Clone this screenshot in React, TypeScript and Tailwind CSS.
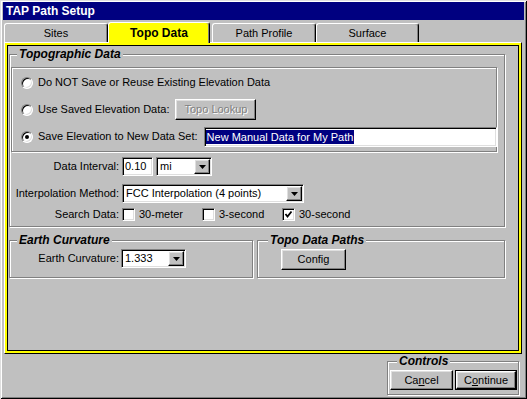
import type { ReactNode } from 'react';

const raised =
  'border border-t-white border-l-white border-r-black border-b-black shadow-[inset_-1px_-1px_0_#808080,inset_1px_1px_0_#dfdfdf]';
const sunken =
  'border border-t-[#808080] border-l-[#808080] border-r-white border-b-white shadow-[inset_1px_1px_0_#000,inset_-1px_-1px_0_#dfdfdf]';
const etched = 'border border-[#808080] shadow-[1px_1px_0_#fff,inset_1px_1px_0_#fff]';

function Legend({ children, className = '' }: { children: ReactNode; className?: string }) {
  return (
    <legend className={`px-[2px] bg-[#c0c0c0] text-[12px] leading-[14px] font-bold italic ${className}`}>
      {children}
    </legend>
  );
}

function Radio({ checked }: { checked?: boolean }) {
  return (
    <span className="w-[12px] h-[12px] rounded-full bg-white border border-t-[#808080] border-l-[#808080] border-r-white border-b-white shadow-[inset_1px_1px_0_#000,inset_-1px_-1px_0_#dfdfdf] flex items-center justify-center shrink-0">
      {checked && <span className="w-[4px] h-[4px] rounded-full bg-black" />}
    </span>
  );
}

function Check({ label, checked }: { label: string; checked?: boolean }) {
  return (
    <div className="w-[80px] flex items-center gap-[4px]">
      <span className={`w-[13px] h-[13px] bg-white flex items-center justify-center shrink-0 ${sunken}`}>
        {checked && (
          <svg width="9" height="9" viewBox="0 0 9 9">
            <polyline points="1.5,4 3.5,6.5 7.5,1.5" fill="none" stroke="#000" strokeWidth="1.8" />
          </svg>
        )}
      </span>
      <span className="whitespace-nowrap">{label}</span>
    </div>
  );
}

function Arrow() {
  return (
    <span className={`w-[16px] h-full bg-[#c0c0c0] flex items-center justify-center shrink-0 ${raised}`}>
      <svg width="7" height="4" viewBox="0 0 7 4">
        <polygon points="0,0 7,0 3.5,4" fill="#000" />
      </svg>
    </span>
  );
}

function Select({ value, className }: { value: string; className: string }) {
  return (
    <div className={`h-[19px] bg-white p-[1px] flex shrink-0 ${sunken} ${className}`}>
      <span className="flex-1 pl-[2px] leading-[15px] whitespace-nowrap">{value}</span>
      <Arrow />
    </div>
  );
}

function Tab({ label, active, className }: { label: string; active?: boolean; className: string }) {
  return (
    <div
      className={`flex items-center justify-center rounded-t-[3px] border-t border-l border-r border-t-white border-l-white border-r-black shadow-[inset_-1px_0_0_#808080] ${
        active ? 'relative z-10 -mb-[1px] h-[21px] bg-[#ffff00] text-[12px] font-bold' : 'h-[19px] bg-[#c0c0c0]'
      } ${className}`}
    >
      {label}
    </div>
  );
}

export default function App() {
  return (
    <div
      className="w-[527px] h-[399px] bg-[#c0c0c0] pt-[2px] px-[3px] pb-[3px] flex flex-col text-black text-[11px] shadow-[inset_1px_1px_0_#dfdfdf,inset_-1px_-1px_0_#000,inset_2px_2px_0_#fff,inset_-2px_-2px_0_#808080]"
      style={{ fontFamily: '"Liberation Sans", Arial, sans-serif' }}
    >
      <div className="h-[18px] bg-[#000080] text-white text-[12px] font-bold flex items-center pl-[3px]">TAP Path Setup</div>

      {/* Tabs */}
      <div className="mt-[2px] h-[20px] flex items-end ml-[1px]">
        <Tab label="Sites" className="w-[104px]" />
        <Tab label="Topo Data" active className="w-[102px]" />
        <Tab label="Path Profile" className="w-[104px] ml-[2px]" />
        <Tab label="Surface" className="w-[103px]" />
      </div>

      {/* Panel */}
      <div className="ml-[1px] w-[518px] h-[312px] border border-t-white border-l-white border-r-black border-b-black">
        <div className="h-full border-2 border-[#ffff00]">
          <div className="h-full border border-black px-[1px] pt-[1px]">
            <fieldset className={`w-[496px] pb-[5px] ${etched}`}>
              <Legend className="ml-[7px]">Topographic Data</Legend>
              <div className={`mt-[6px] ml-[1px] w-[486px] h-[85px] pt-[1px] pl-[9px] whitespace-nowrap ${etched}`}>
                <div className="h-[27px] flex items-center gap-[5px]">
                  <Radio />
                  <span>Do NOT Save or Reuse Existing Elevation Data</span>
                </div>
                <div className="h-[27px] flex items-center gap-[5px]">
                  <Radio />
                  <span>Use Saved Elevation Data:</span>
                  <span
                    className={`ml-[1px] w-[81px] h-[21px] shrink-0 flex items-center justify-center text-[#808080] [text-shadow:1px_1px_0_#fff] ${raised}`}
                  >
                    Topo Lookup
                  </span>
                </div>
                <div className="h-[27px] flex items-center gap-[5px]">
                  <Radio checked />
                  <span className="shrink-0">Save Elevation to New Data Set:</span>
                  <div className={`ml-[1px] w-[293px] h-[20px] shrink-0 bg-white flex items-center pl-[1px] ${sunken}`}>
                    <span className="bg-[#000080] text-white leading-[14px] px-[1px]">New Manual Data for My Path</span>
                  </div>
                </div>
              </div>

              <div className="mt-[5px] flex items-center">
                <span className="w-[109px] text-right">Data Interval:</span>
                <div className={`ml-[3px] w-[31px] h-[19px] bg-white pl-[2px] leading-[17px] ${sunken}`}>0.10</div>
                <Select value="mi" className="ml-[3px] w-[56px]" />
              </div>
              <div className="mt-[8px] flex items-center">
                <span className="w-[109px] text-right">Interpolation Method:</span>
                <Select value="FCC Interpolation (4 points)" className="ml-[3px] w-[182px]" />
              </div>
              <div className="mt-[5px] h-[13px] flex items-center">
                <span className="w-[109px] text-right">Search Data:</span>
                <div className="ml-[3px] flex">
                  <Check label="30-meter" />
                  <Check label="3-second" />
                  <Check label="30-second" checked />
                </div>
              </div>
            </fieldset>

            <div className="mt-[6px] flex gap-[4px]">
              <fieldset className={`w-[244px] pb-[8px] ${etched}`}>
                <Legend className="ml-[7px]">Earth Curvature</Legend>
                <div className="mt-[2px] flex items-center">
                  <span className="w-[109px] text-right">Earth Curvature:</span>
                  <Select value="1.333" className="ml-[2px] w-[65px]" />
                </div>
              </fieldset>
              <fieldset className={`w-[248px] pb-[7px] ${etched}`}>
                <Legend className="ml-[10px]">Topo Data Paths</Legend>
                <div className="mt-[2px] ml-[23px]">
                  <span className={`w-[65px] h-[21px] flex items-center justify-center ${raised}`}>Config</span>
                </div>
              </fieldset>
            </div>
          </div>
        </div>
      </div>

      {/* Controls */}
      <div className="flex justify-end mr-[5px]">
        <fieldset className={`w-[132px] pl-[2px] pb-[4px] ${etched}`}>
          <Legend className="ml-[7px]">Controls</Legend>
          <div className="mt-[2px] flex gap-[2px]">
            <span className={`w-[63px] h-[20px] flex items-center justify-center ${raised}`}>
              Ca<u>n</u>cel
            </span>
            <span className="w-[62px] h-[20px] border border-black flex">
              <span className={`flex-1 flex items-center justify-center ${raised}`}>
                C<u>o</u>ntinue
              </span>
            </span>
          </div>
        </fieldset>
      </div>
    </div>
  );
}
